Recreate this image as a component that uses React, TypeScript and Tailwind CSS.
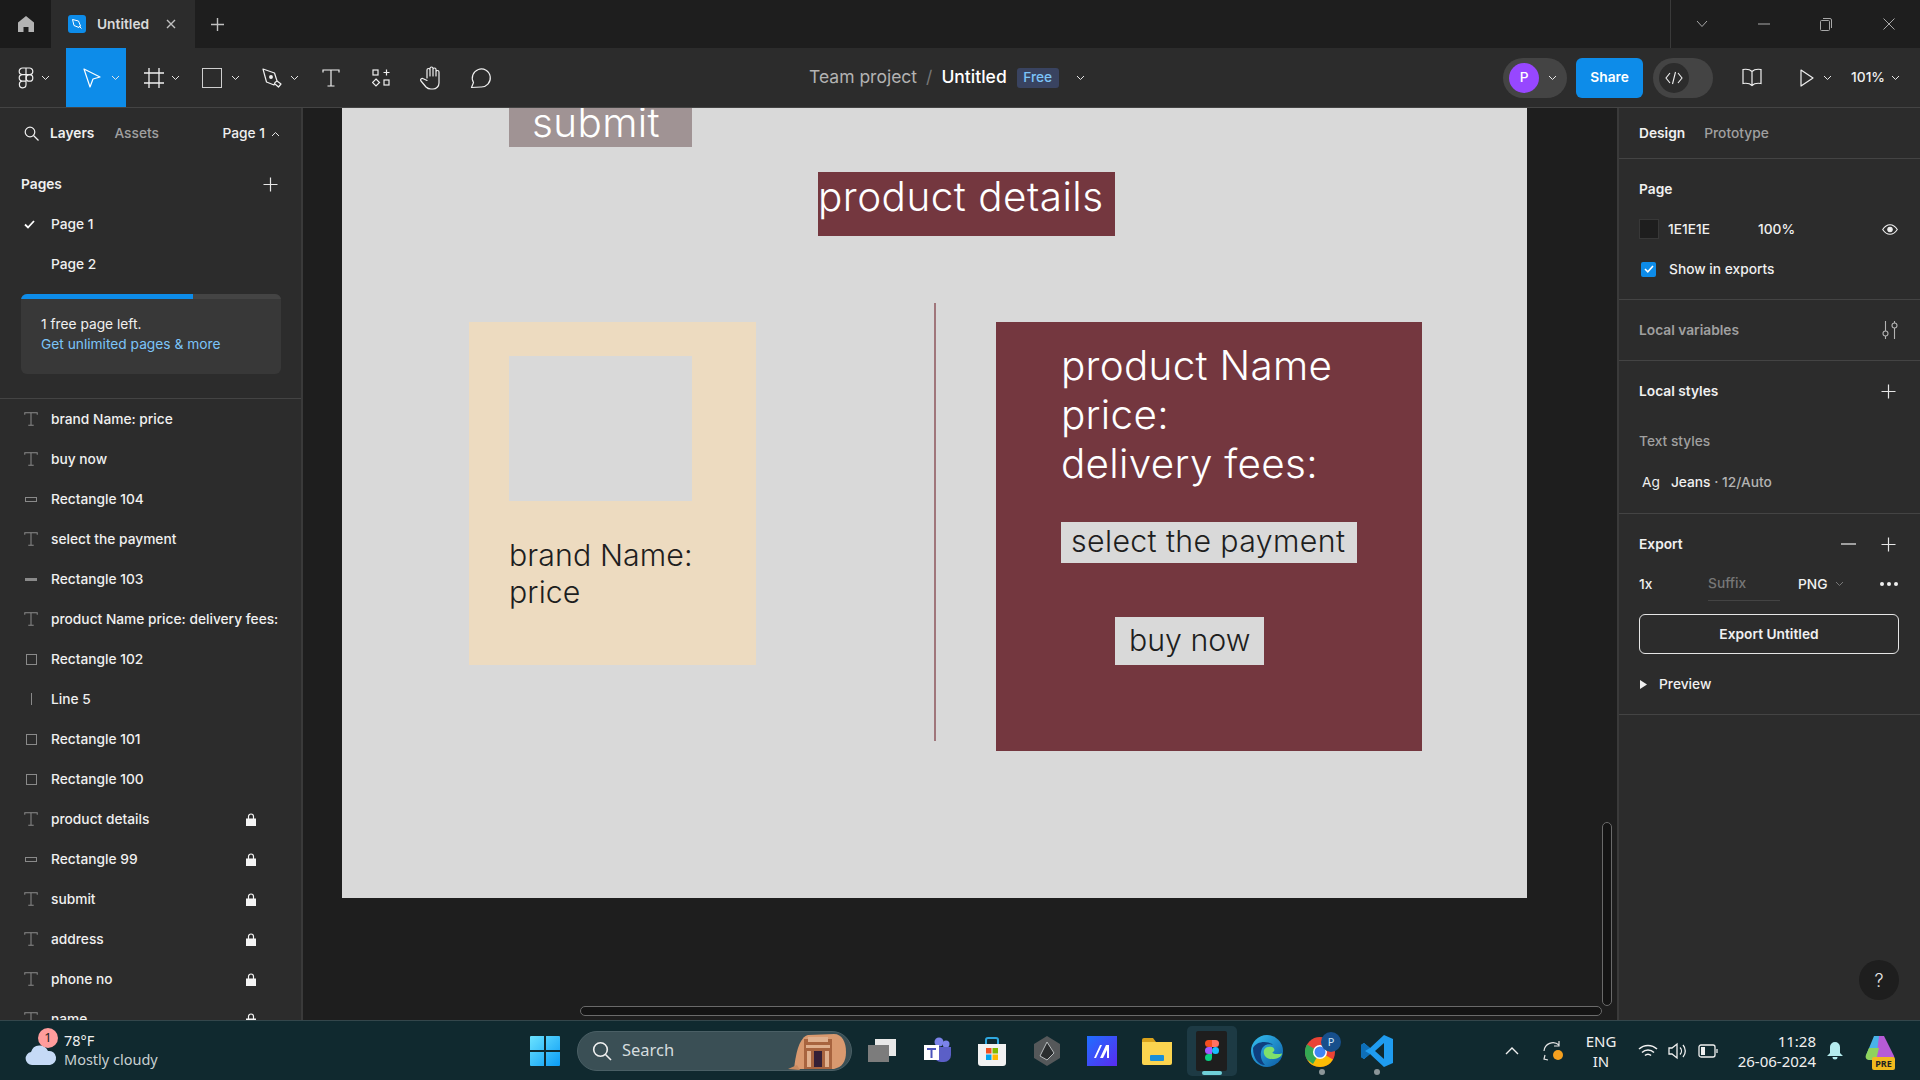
import type { ReactNode } from "react";

const Chevron = ({ className = "", color = "#e6e6e6" }: { className?: string; color?: string }) => (
  <svg width="9" height="6" viewBox="0 0 9 6" fill="none" className={className}>
    <path d="M1 1l3.5 3.5L8 1" stroke={color} strokeWidth="1" />
  </svg>
);

const Plus = ({ size = 15 }: { size?: number }) => (
  <svg width={size} height={size} viewBox="0 0 15 15" fill="none">
    <path d="M7.5 0.5v14M0.5 7.5h14" stroke="#e6e6e6" strokeWidth="1.2" />
  </svg>
);

const FigmaOutline = () => (
  <svg width="16" height="22" viewBox="0 0 16 22" fill="none" stroke="#f0f0f0" strokeWidth="1.2">
    <path d="M8 1H4.5a3.3 3.3 0 000 6.6H8zM8 1h3.5a3.3 3.3 0 010 6.6H8zM8 7.6H4.5a3.3 3.3 0 000 6.6H8zM8 14.2H4.5A3.3 3.3 0 108 17.5z" />
    <circle cx="11.5" cy="10.9" r="3.3" />
  </svg>
);

const MoveIcon = () => (
  <svg width="18" height="20" viewBox="0 0 18 20" fill="none">
    <path d="M1 1l16 8-7 2-3 8z" stroke="#fff" strokeWidth="1.2" strokeLinejoin="round" />
  </svg>
);

const FrameIcon = () => (
  <svg width="20" height="20" viewBox="0 0 20 20" fill="none" stroke="#f0f0f0" strokeWidth="1.3">
    <path d="M5 0v20M15 0v20M0 5h20M0 15h20" />
  </svg>
);

const PenIcon = () => (
  <svg width="20" height="20" viewBox="0 0 20 20" fill="none" stroke="#f0f0f0" strokeWidth="1.2" strokeLinejoin="round">
    <path d="M1 1l11.5 4 2.5 8-2 1.5-1 2.5-7.5-3z" />
    <path d="M15 13l4 3-2.5 3-3.5-3" />
    <circle cx="9" cy="9" r="1.3" fill="#f0f0f0" />
  </svg>
);

const TextGlyph = ({ size = 18, color = "#f0f0f0", stroke = 1.2 }: { size?: number; color?: string; stroke?: number }) => (
  <svg width={size} height={size} viewBox="0 0 18 18" fill="none" stroke={color} strokeWidth={stroke}>
    <path d="M1 3.5V1h16v2.5M9 1v16M5.5 17h7" />
  </svg>
);

const CompsIcon = () => (
  <svg width="18" height="18" viewBox="0 0 18 18" fill="none" stroke="#f0f0f0" strokeWidth="1.2">
    <rect x="1" y="1" width="5" height="5" />
    <path d="M14.5 0.5v6M11.5 3.5h6" />
    <path d="M4 10l3.5 3.5L4 17 .5 13.5z" />
    <rect x="12" y="11" width="5" height="5" />
  </svg>
);

const HandIcon = () => (
  <svg width="22" height="24" viewBox="0 0 22 24" fill="none" stroke="#f0f0f0" strokeWidth="1.2" strokeLinecap="round" strokeLinejoin="round">
    <path d="M7 12V4a1.5 1.5 0 013 0v6V2.5a1.5 1.5 0 013 0V10V3.5a1.5 1.5 0 013 0V10V6a1.5 1.5 0 013 0v11a6 6 0 01-6 6h-2a7 7 0 01-5-2l-5-6a1.6 1.6 0 012.3-2.2L7 14.5" />
  </svg>
);

const CommentIcon = () => (
  <svg width="22" height="22" viewBox="0 0 22 22" fill="none" stroke="#f0f0f0" strokeWidth="1.2" strokeLinejoin="round">
    <path d="M1.5 20.5l2-5A9 9 0 1110.8 20l-9.3.5z" />
  </svg>
);

function ToolCell({ className, children, active }: { className: string; children: ReactNode; active?: boolean }) {
  return <div className={`${className} h-full flex items-center ${active ? "bg-[#0d8ce9]" : ""}`}>{children}</div>;
}

function TitleBar() {
  return (
    <div className="h-12 bg-[#1e1e1e] flex items-stretch shrink-0">
      <div className="w-[52px] flex items-center justify-center border-r border-[#2c2c2c] bg-[#1b1b1b]">
        <svg width="18" height="18" viewBox="0 0 18 18" fill="#b3b3b3">
          <path d="M9 1l8 6.5V17h-5.5v-5h-5v5H1V7.5z" />
        </svg>
      </div>
      <div className="w-[143px] bg-[#2c2c2c] flex items-center pl-[16px]">
        <div className="w-[18px] h-[18px] rounded-[3px] bg-[#0d8ce9] flex items-center justify-center">
          <svg width="12" height="12" viewBox="0 0 12 12" fill="none" stroke="#fff" strokeWidth="1">
            <path d="M1.5 1.5l6 1.5 2 5-1.5 1.5-5-2zM8 8l2.5 2.5" />
          </svg>
        </div>
        <span className="ml-[11px] text-[13.75px] font-semibold text-[#d9d9d9]">Untitled</span>
        <svg width="10" height="10" viewBox="0 0 10 10" className="ml-[17px]" stroke="#c0c0c0" strokeWidth="1.4">
          <path d="M1 1l8 8M9 1l-8 8" />
        </svg>
      </div>
      <div className="w-[44px] flex items-center justify-center">
        <svg width="13" height="13" viewBox="0 0 13 13" stroke="#c0c0c0" strokeWidth="1.4">
          <path d="M6.5 0v13M0 6.5h13" />
        </svg>
      </div>
      <div className="ml-auto w-[250px] border-l border-[#3a3a3a] flex items-center text-[#bdbdbd]">
        <div className="w-[62px] flex justify-center">
          <svg width="12" height="8" viewBox="0 0 12 8" fill="none" stroke="#a8a8a8"><path d="M1 1l5 5.5L11 1" /></svg>
        </div>
        <div className="w-[62px] flex justify-center">
          <svg width="12" height="2" viewBox="0 0 12 2"><path d="M0 1h12" stroke="#a8a8a8" /></svg>
        </div>
        <div className="w-[64px] flex justify-center">
          <svg width="12" height="13" viewBox="0 0 12 13" fill="none" stroke="#a8a8a8"><rect x=".5" y="2.5" width="9" height="10" rx="1" /><path d="M3 .5h7a1.5 1.5 0 011.5 1.5v8" /></svg>
        </div>
        <div className="w-[62px] flex justify-center">
          <svg width="12" height="12" viewBox="0 0 12 12" stroke="#a8a8a8"><path d="M.5.5l11 11M11.5.5l-11 11" /></svg>
        </div>
      </div>
    </div>
  );
}

function Toolbar() {
  return (
    <div className="h-[60px] bg-[#2c2c2c] border-b border-[#444444] flex items-center shrink-0 text-[#f0f0f0]">
      <ToolCell className="w-[66px] pl-[18px] gap-[7px]"><FigmaOutline /><Chevron /></ToolCell>
      <ToolCell className="w-[60px] pl-[17px] gap-[10px]" active><MoveIcon /><Chevron /></ToolCell>
      <ToolCell className="w-[60px] pl-[18px] gap-[7px]"><FrameIcon /><Chevron /></ToolCell>
      <ToolCell className="w-[60px] pl-[16px] gap-[9px]">
        <div className="w-5 h-5 border-[1.5px] border-[#cfcfcf]" />
        <Chevron />
      </ToolCell>
      <ToolCell className="w-[60px] pl-[16px] gap-[8px]"><PenIcon /><Chevron /></ToolCell>
      <ToolCell className="w-[50px] justify-center"><TextGlyph /></ToolCell>
      <ToolCell className="w-[50px] justify-center"><CompsIcon /></ToolCell>
      <ToolCell className="w-[50px] justify-center"><HandIcon /></ToolCell>
      <ToolCell className="w-[50px] justify-center"><CommentIcon /></ToolCell>

      <div className="ml-[303px] flex items-center text-[17.5px]">
        <span className="text-[#b3b3b3]">Team project</span>
        <span className="mx-[9px] text-[#777777]">/</span>
        <span className="text-white font-medium">Untitled</span>
        <span className="ml-[10px] w-[42px] h-5 rounded-[3px] bg-[#394360] text-[#7cc4f8] text-[13.75px] font-medium flex items-center justify-center">Free</span>
        <Chevron className="ml-[17px]" />
      </div>

      <div className="ml-auto flex items-center pr-[20px]">
        <div className="w-[64px] h-10 rounded-full bg-[#444444] flex items-center pl-[6px]">
          <div className="w-[30px] h-[30px] rounded-full bg-[#9747ff] text-white text-[13.75px] font-medium flex items-center justify-center">P</div>
          <Chevron className="ml-[9px]" />
        </div>
        <div className="ml-[9px] w-[67px] h-10 rounded-[6px] bg-[#0d8ce9] text-white text-[13.75px] font-semibold flex items-center justify-center">Share</div>
        <div className="ml-[10px] w-[60px] h-10 rounded-full bg-[#444444] flex items-center pl-[6px]">
          <div className="w-[30px] h-[30px] rounded-full bg-[#2c2c2c] flex items-center justify-center">
            <svg width="18" height="14" viewBox="0 0 18 14" fill="none" stroke="#f0f0f0" strokeWidth="1.1">
              <path d="M5 2L1 7l4 5M13 2l4 5-4 5M10.5 1l-3 12" />
            </svg>
          </div>
        </div>
        <div className="ml-[28px]">
          <svg width="22" height="19" viewBox="0 0 22 19" fill="none" stroke="#f0f0f0" strokeWidth="1.2">
            <path d="M11 3.5C9 1.5 5 1 2 1.5v14c3-.5 7 0 9 2 2-2 6-2.5 9-2v-14c-3-.5-7 0-9 2zM11 3.5v14" />
          </svg>
        </div>
        <div className="ml-[37px]">
          <svg width="14" height="18" viewBox="0 0 14 18" fill="none" stroke="#f0f0f0" strokeWidth="1.2" strokeLinejoin="round">
            <path d="M1 1l12 8-12 8z" />
          </svg>
        </div>
        <Chevron className="ml-[9px]" />
        <span className="ml-[19px] text-[13.75px] font-medium">101%</span>
        <Chevron className="ml-[6px]" />
      </div>
    </div>
  );
}

type LayerKind = "text" | "flat" | "dash" | "square" | "line";

const layers: { name: string; kind: LayerKind; locked?: boolean }[] = [
  { name: "brand Name: price", kind: "text" },
  { name: "buy now", kind: "text" },
  { name: "Rectangle 104", kind: "flat" },
  { name: "select the payment", kind: "text" },
  { name: "Rectangle 103", kind: "dash" },
  { name: "product Name price: delivery fees:", kind: "text" },
  { name: "Rectangle 102", kind: "square" },
  { name: "Line 5", kind: "line" },
  { name: "Rectangle 101", kind: "square" },
  { name: "Rectangle 100", kind: "square" },
  { name: "product details", kind: "text", locked: true },
  { name: "Rectangle 99", kind: "flat", locked: true },
  { name: "submit", kind: "text", locked: true },
  { name: "address", kind: "text", locked: true },
  { name: "phone no", kind: "text", locked: true },
  { name: "name", kind: "text", locked: true },
];

function LayerIcon({ kind }: { kind: LayerKind }) {
  if (kind === "text") return <TextGlyph size={14} color="#8a8a8a" stroke={1.3} />;
  if (kind === "flat") return <div className="w-3 h-[5px] border border-[#8a8a8a]" />;
  if (kind === "dash") return <div className="w-3 h-[3px] bg-[#8a8a8a]" />;
  if (kind === "line") return <div className="w-px h-3 bg-[#8a8a8a]" />;
  return <div className="w-[11px] h-[11px] border border-[#8a8a8a]" />;
}

const Lock = () => (
  <svg width="10" height="13" viewBox="0 0 10 13" className="shrink-0">
    <path d="M2.5 6V3.5a2.5 2.5 0 015 0V6" fill="none" stroke="#f5f5f5" strokeWidth="1.2" />
    <rect y="5.5" width="10" height="7.5" fill="#f5f5f5" />
  </svg>
);

function LeftPanel() {
  return (
    <aside className="w-[303px] h-full bg-[#2c2c2c] border-r-2 border-[#3a3a3a] overflow-hidden shrink-0 text-[13.75px] text-[#f0f0f0]">
      <div className="h-[51px] flex items-center pl-[24px] pr-[21px]">
        <svg width="15" height="15" viewBox="0 0 15 15" fill="none" stroke="#f0f0f0" strokeWidth="1.2">
          <circle cx="6" cy="6" r="4.8" /><path d="M9.5 9.5l5 5" />
        </svg>
        <span className="ml-[11px] font-semibold">Layers</span>
        <span className="ml-[20px] font-medium text-[#a0a0a0]">Assets</span>
        <span className="ml-auto font-medium">Page 1</span>
        <svg width="9" height="6" viewBox="0 0 9 6" fill="none" className="ml-[6px]"><path d="M1 5l3.5-3.5L8 5" stroke="#e6e6e6" /></svg>
      </div>
      <div className="mt-[5px] h-10 flex items-center justify-between pl-[21px] pr-[23px]">
        <span className="font-semibold">Pages</span>
        <Plus />
      </div>
      <div className="h-10 flex items-center pl-[24px] font-medium">
        <svg width="11" height="9" viewBox="0 0 11 9" fill="none" stroke="#fff" strokeWidth="1.8"><path d="M1 4.5l3 3L10 1" /></svg>
        <span className="ml-[16px]">Page 1</span>
      </div>
      <div className="h-10 flex items-center pl-[51px] font-medium">Page 2</div>
      <div className="mx-[21px] mt-[10px] h-[80px] w-[260px] rounded-[6px] bg-[#383838] overflow-hidden">
        <div className="h-[5px] bg-[#444444]">
          <div className="h-full w-[172px] bg-[#0d8ce9]" />
        </div>
        <div className="pl-[20px] pt-[15px] leading-[20px]">
          <div>1 free page left.</div>
          <div className="text-[#7cc4f8]">Get unlimited pages &amp; more</div>
        </div>
      </div>
      <div className="mt-[24px] border-t border-[#444444]">
        {layers.map((layer) => (
          <div key={layer.name} className="h-10 flex items-center font-medium">
            <div className="w-[51px] pl-[24px] pr-[13px] flex justify-center"><LayerIcon kind={layer.kind} /></div>
            <span className="w-[195px] whitespace-nowrap">{layer.name}</span>
            {layer.locked && <Lock />}
          </div>
        ))}
      </div>
    </aside>
  );
}

function Canvas() {
  return (
    <div className="relative flex-1 h-full bg-[#1e1e1e] overflow-hidden">
      {/* frame on the free canvas; offsets are relative to it */}
      <div className="absolute left-[39px] top-0 w-[1185px] h-[790px] bg-[#d9d9d9] font-light">
        <div className="absolute left-[167px] top-0 w-[183px] h-[39px] bg-[#a09394] overflow-hidden text-white text-[40.4px] tracking-[0.4px] leading-[30px] pl-[23px]">submit</div>
        <div className="absolute left-[476px] top-[64px] w-[297px] h-[64px] bg-[#74373f] text-white text-[40.4px] tracking-[0.5px] leading-[50px] whitespace-nowrap">product details</div>

        <div className="absolute left-[127px] top-[214px] w-[287px] h-[343px] bg-[#eddbc0] text-[#1e1e1e]">
          <div className="ml-[40px] mt-[34px] w-[183px] h-[145px] bg-[#d9d9d9]" />
          <div className="ml-[40px] mt-[36px] text-[30.3px] tracking-[0.1px] leading-[37px]">brand Name:<br />price</div>
        </div>

        <div className="absolute left-[592px] top-[195px] w-[2px] h-[438px] bg-[#a0767b]" />

        <div className="absolute left-[654px] top-[214px] w-[426px] h-[429px] bg-[#74373f]">
          <div className="absolute left-[65px] top-[19px] text-white text-[40.4px] tracking-[0.3px] leading-[49px] whitespace-nowrap">product Name<br />price:<br />delivery fees:</div>
          <div className="absolute left-[65px] top-[200px] w-[296px] h-[41px] bg-[#d9d9d9] text-[#1e1e1e] text-[30.3px] tracking-[0.37px] leading-[38px] pl-[10px] whitespace-nowrap">select the payment</div>
          <div className="absolute left-[119px] top-[295px] w-[149px] h-[48px] bg-[#d9d9d9] text-[#1e1e1e] text-[30.3px] leading-[46px] pl-[14px] whitespace-nowrap">buy now</div>
        </div>
      </div>

      <div className="absolute left-[277px] top-[898px] w-[1022px] h-[10px] rounded-full bg-[#141414] border border-[#6a6a6a]" />
      <div className="absolute left-[1299px] top-[714px] w-[10px] h-[184px] rounded-full bg-[#141414] border border-[#6a6a6a]" />
    </div>
  );
}

function SectionRule() {
  return <div className="border-t border-[#444444]" />;
}

function RightPanel() {
  return (
    <aside className="relative w-[303px] h-full bg-[#2c2c2c] border-l-2 border-[#3a3a3a] shrink-0 text-[13.75px] text-[#f0f0f0] overflow-hidden">
      <div className="h-[50px] flex items-center pl-[20px]">
        <span className="font-semibold">Design</span>
        <span className="ml-[19px] font-medium text-[#a0a0a0]">Prototype</span>
      </div>
      <SectionRule />
      <div className="h-[140px] pt-[10px] pl-[20px] pr-[22px] font-medium">
        <div className="h-10 flex items-center font-semibold">Page</div>
        <div className="h-10 flex items-center">
          <div className="w-[20px] h-[20px] bg-[#1e1e1e] border border-[#383838]" />
          <span className="ml-[9px]">1E1E1E</span>
          <span className="ml-[48px]">100%</span>
          <svg width="16" height="11" viewBox="0 0 16 11" fill="none" className="ml-auto" stroke="#f0f0f0" strokeWidth="1.1">
            <path d="M.7 5.5C3 2 5.5.7 8 .7s5 1.3 7.3 4.8C13 9 10.5 10.3 8 10.3S3 9 .7 5.5z" />
            <circle cx="8" cy="5.5" r="2.2" fill="#f0f0f0" />
          </svg>
        </div>
        <div className="h-10 flex items-center">
          <div className="ml-[2px] w-[15px] h-[15px] rounded-[2px] bg-[#0d8ce9] flex items-center justify-center">
            <svg width="10" height="8" viewBox="0 0 10 8" fill="none" stroke="#fff" strokeWidth="1.6"><path d="M1 4l2.8 2.8L9 1" /></svg>
          </div>
          <span className="ml-[13px]">Show in exports</span>
        </div>
      </div>
      <SectionRule />
      <div className="h-[60px] flex items-center justify-between pl-[20px] pr-[22px] font-semibold text-[#a0a0a0]">
        <span>Local variables</span>
        <svg width="16" height="18" viewBox="0 0 16 18" fill="none" stroke="#b3b3b3" strokeWidth="1.1">
          <path d="M3.5 0v10M3.5 15v3M12.5 0v2M12.5 7v11" />
          <circle cx="3.5" cy="12.5" r="2.5" /><circle cx="12.5" cy="4.5" r="2.5" />
        </svg>
      </div>
      <SectionRule />
      <div className="h-[152px] pl-[20px] pr-[24px]">
        <div className="h-[60px] flex items-center justify-between font-semibold">
          <span>Local styles</span>
          <Plus />
        </div>
        <div className="h-10 flex items-center font-medium text-[#a0a0a0]">Text styles</div>
        <div className="h-[40px] mt-[1px] flex items-center font-medium">
          <span className="ml-[3px] font-normal">Ag</span>
          <span className="ml-[11px]">Jeans</span>
          <span className="text-[#b3b3b3]">&nbsp;· 12/Auto</span>
        </div>
      </div>
      <SectionRule />
      <div className="h-[200px] pt-[5px] pl-[20px] pr-[22px]">
        <div className="h-[50px] flex items-center font-semibold">
          <span>Export</span>
          <svg width="15" height="2" viewBox="0 0 15 2" className="ml-auto"><path d="M0 1h15" stroke="#f0f0f0" strokeWidth="1.2" /></svg>
          <div className="ml-[25px] mr-[2px]"><Plus /></div>
        </div>
        <div className="h-[30px] flex items-center font-medium">
          <span className="w-[69px]">1x</span>
          <span className="w-[90px] h-[34px] flex items-center">
            <span className="w-[72px] h-full flex items-center border-b border-[#444444] text-[#777777]">Suffix</span>
          </span>
          <span>PNG</span>
          <Chevron className="ml-[7px]" color="#777777" />
          <div className="ml-auto flex gap-[3px]">
            <div className="w-[4px] h-[4px] rounded-full bg-[#f0f0f0]" />
            <div className="w-[4px] h-[4px] rounded-full bg-[#f0f0f0]" />
            <div className="w-[4px] h-[4px] rounded-full bg-[#f0f0f0]" />
          </div>
        </div>
        <div className="h-[40px] mt-[15px] w-[260px] rounded-[6px] border border-[#e6e6e6] flex items-center justify-center font-semibold">Export Untitled</div>
        <div className="h-[60px] flex items-center font-medium">
          <svg width="7" height="9" viewBox="0 0 7 9" className="ml-[1px]"><path d="M0 0l7 4.5L0 9z" fill="#f0f0f0" /></svg>
          <span className="ml-[12px]">Preview</span>
        </div>
      </div>
      <SectionRule />
      <div className="absolute right-[21px] bottom-[20px] w-10 h-10 rounded-full bg-[#1e1e1e] flex items-center justify-center text-[#e6e6e6] text-[18px] font-light">?</div>
    </aside>
  );
}

const WindowsLogo = () => (
  <svg width="30" height="30" viewBox="0 0 30 30">
    <defs>
      <linearGradient id="win" x1="0" y1="0" x2="1" y2="1">
        <stop offset="0" stopColor="#6be3ff" />
        <stop offset="1" stopColor="#0a9bf5" />
      </linearGradient>
    </defs>
    <path d="M1 0h13v14H0V1a1 1 0 011-1zM16 0h13a1 1 0 011 1v13H16zM0 16h14v14H1a1 1 0 01-1-1zM16 16h14v13a1 1 0 01-1 1H16z" fill="url(#win)" />
  </svg>
);

const Temple = () => (
  <svg width="62" height="40" viewBox="0 0 62 40">
    <path d="M8 38C10 20 14 6 22 4l26-1c8 0 12 8 12 18 0 10-4 15-12 17z" fill="#d9996f" />
    <path d="M18 8h28v30H18z" fill="#a8643f" />
    <path d="M22 6h20v5H22zM20 14h24v3H20z" fill="#e0b08e" />
    <path d="M28 20h8v16h-8z" fill="#342037" />
    <path d="M21 20h4v16h-4zM39 20h4v16h-4z" fill="#e0b08e" />
    <path d="M2 38l9-4 3 5z" fill="#c98a60" />
  </svg>
);

function TaskIcon({ children, dot }: { children: ReactNode; dot?: boolean }) {
  return (
    <div className="relative w-[55px] h-full flex items-center justify-center shrink-0">
      {children}
      {dot && <div className="absolute bottom-[5px] w-[6px] h-[6px] rounded-full bg-[#8b9598]" />}
    </div>
  );
}

function Taskbar() {
  return (
    <div className="relative h-[60px] bg-[#10292f] border-t border-[#34464b] flex items-center shrink-0 text-[#f0f0f0] font-['Noto_Sans',sans-serif]">
      <div className="relative w-[530px] h-full shrink-0">
        <svg width="32" height="22" viewBox="0 0 32 22" className="absolute left-[25px] top-[22px]">
          <path d="M7 22a6.5 6.5 0 01-1-12.9A9 9 0 0123 8a7 7 0 012 14z" fill="#c5daf6" />
        </svg>
        <div className="absolute left-[38px] top-[7px] w-[20px] h-[20px] rounded-full bg-[#ff9c9c] text-[#1e1e1e] text-[13px] flex items-center justify-center">1</div>
        <div className="absolute left-[64px] top-[9px] text-[14.5px] leading-[20px]">78°F</div>
        <div className="absolute left-[64px] top-[28px] text-[14.5px] leading-[20px] text-[#c8d0d2]">Mostly cloudy</div>
      </div>
      <WindowsLogo />
      <div className="ml-[17px] w-[275px] h-10 rounded-full bg-[#3a4f55] border border-[#4a5f65] flex items-center pl-[14px] relative shrink-0">
        <svg width="20" height="20" viewBox="0 0 20 20" fill="none" stroke="#f0f0f0" strokeWidth="1.6">
          <circle cx="8.5" cy="8.5" r="6.8" /><path d="M13.5 13.5l5.5 5.5" />
        </svg>
        <span className="ml-[10px] text-[16.5px] text-[#d5dcde]">Search</span>
        <div className="absolute right-[3px] top-[-1px]"><Temple /></div>
      </div>
      <div className="ml-[2px] flex items-center h-full">
        <TaskIcon>
          <svg width="30" height="26" viewBox="0 0 30 26">
            <rect x="8" y="1" width="21" height="17" fill="#e8e8e8" />
            <rect x="1" y="7" width="21" height="17" fill="#7c7c7c" />
          </svg>
        </TaskIcon>
        <TaskIcon>
          <svg width="28" height="28" viewBox="0 0 28 28">
            <circle cx="23" cy="7" r="3.5" fill="#7b83eb" /><circle cx="16" cy="5" r="4.5" fill="#7b83eb" />
            <path d="M11 10h17v8a7 7 0 01-7 7h-3a7 7 0 01-7-7z" fill="#5b5fc7" />
            <rect x="1" y="8" width="15" height="15" fill="#fff" />
            <path d="M4 11h9v2H9.5v8h-2v-8H4z" fill="#4b53bc" />
          </svg>
        </TaskIcon>
        <TaskIcon>
          <svg width="30" height="30" viewBox="0 0 30 30">
            <path d="M9 8V4a2 2 0 012-2h8a2 2 0 012 2v4" fill="none" stroke="#2fa8e0" strokeWidth="2" />
            <path d="M1 8h28v19a3 3 0 01-3 3H4a3 3 0 01-3-3z" fill="#f2f2f2" />
            <rect x="9" y="12" width="5.5" height="5.5" fill="#f25022" /><rect x="15.5" y="12" width="5.5" height="5.5" fill="#7fba00" />
            <rect x="9" y="18.5" width="5.5" height="5.5" fill="#00a4ef" /><rect x="15.5" y="18.5" width="5.5" height="5.5" fill="#ffb900" />
          </svg>
        </TaskIcon>
        <TaskIcon>
          <svg width="26" height="30" viewBox="0 0 26 30">
            <path d="M13 0l13 8v14l-13 8L0 22V8z" fill="#55585a" />
            <path d="M13 6l7 11-7 7-7-4z" fill="#2a2d2f" stroke="#b8bcbe" />
          </svg>
        </TaskIcon>
        <TaskIcon>
          <svg width="30" height="30" viewBox="0 0 30 30">
            <defs><linearGradient id="mv" x1="0" y1="0" x2="1" y2="1"><stop offset="0" stopColor="#1f6fff" /><stop offset="1" stopColor="#5a2bf0" /></linearGradient></defs>
            <rect width="30" height="30" fill="url(#mv)" />
            <path d="M7 22l6-13h2l-6 13zM13 22l6-13h3v13h-2v-8l-4 8z" fill="#fff" />
          </svg>
        </TaskIcon>
        <TaskIcon>
          <svg width="30" height="28" viewBox="0 0 30 28">
            <path d="M0 3a2 2 0 012-2h9l3 4H0z" fill="#d9a21b" />
            <path d="M0 5h30v21a2 2 0 01-2 2H2a2 2 0 01-2-2z" fill="#fbd44f" />
            <rect x="8" y="18" width="14" height="6" rx="1" fill="#1a8fd8" />
          </svg>
        </TaskIcon>
        <TaskIcon>
          <div className="relative w-[50px] h-[50px] rounded-[5px] bg-[#1d3a44] flex items-center justify-center">
            <div className="w-[31px] h-[40px] bg-[#1e1e1e] rounded-[2px] flex items-center justify-center">
              <svg width="14" height="22" viewBox="0 0 14 22">
                <path d="M7 0H3.5a3.5 3.5 0 000 7H7z" fill="#f24e1e" />
                <path d="M7 0h3.5a3.5 3.5 0 010 7H7z" fill="#ff7262" />
                <path d="M7 7H3.5a3.5 3.5 0 000 7H7z" fill="#a259ff" />
                <circle cx="10.5" cy="10.5" r="3.5" fill="#1abcfe" />
                <path d="M7 14H3.5A3.5 3.5 0 107 17.5z" fill="#0acf83" />
              </svg>
            </div>
            <div className="absolute bottom-[1px] left-[15px] w-[20px] h-[4px] rounded-full bg-[#6fd0d8]" />
          </div>
        </TaskIcon>
        <TaskIcon>
          <svg width="32" height="32" viewBox="0 0 32 32">
            <defs><linearGradient id="edge" x1="0" y1="0" x2="1" y2="1"><stop offset="0" stopColor="#35c1f1" /><stop offset="1" stopColor="#0c59a4" /></linearGradient></defs>
            <circle cx="16" cy="16" r="16" fill="url(#edge)" />
            <path d="M31 18c0 4-5 6-10 6-7 0-9-5-8-9 1-3 5-4 8-3 3 1 3 4 1 5-3 2 9 3 9 1z" fill="#7fe06b" />
            <path d="M2 13c3-7 15-8 20-3-5-2-11 0-12 7-1 5 1 10 4 13C8 30 2 24 2 13z" fill="#0f3f7f" />
          </svg>
        </TaskIcon>
        <TaskIcon dot>
          <svg width="36" height="36" viewBox="0 0 36 36" className="mt-[-2px] ml-[3px]">
            <circle cx="15" cy="20" r="15" fill="#ea4335" />
            <path d="M15 20L28 27.5A15 15 0 012 27.5z" fill="#fbbc05" />
            <path d="M2 27.5A15 15 0 012 12.5l13 7.5-7 12z" fill="#34a853" />
            <circle cx="15" cy="20" r="7" fill="#fff" /><circle cx="15" cy="20" r="5.5" fill="#4285f4" />
            <circle cx="26" cy="10" r="10" fill="#174f8c" />
            <text x="26" y="14" textAnchor="middle" fontSize="11" fill="#cfe3f7" fontFamily="Noto Sans">P</text>
          </svg>
        </TaskIcon>
        <TaskIcon dot>
          <svg width="32" height="32" viewBox="0 0 32 32">
            <path d="M23 0l9 4v24l-9 4-14-13-6 5-3-2v-12l3-2 6 5z" fill="#1f9cf0" />
            <path d="M23 8l-9 8 9 8z" fill="#10292f" />
            <path d="M0 10l3-2 6 5-5 3 5 3-6 5-3-2z" fill="#0e6fb8" />
          </svg>
        </TaskIcon>
      </div>
      <div className="ml-auto flex items-center h-full pr-[25px]">
        <svg width="14" height="8" viewBox="0 0 14 8" fill="none" stroke="#f0f0f0" strokeWidth="1.4"><path d="M1 7l6-6 6 6" /></svg>
        <svg width="22" height="24" viewBox="0 0 22 24" fill="none" className="ml-[23px]">
          <path d="M2 12a9 9 0 0115-6M17 2v5h-5M6 21l-4-1 1-4" stroke="#e6e6e6" strokeWidth="1.2" />
          <circle cx="16" cy="16" r="5" fill="#f5a01f" />
        </svg>
        <div className="ml-[16px] w-[42px] text-center text-[15px] leading-[20px]">ENG<br />IN</div>
        <svg width="20" height="16" viewBox="0 0 20 16" fill="none" stroke="#f0f0f0" strokeWidth="1.5" className="ml-[16px]">
          <path d="M1 6a13 13 0 0118 0M4 9.5a8.5 8.5 0 0112 0M7 12.5a4 4 0 016 0" />
        </svg>
        <svg width="20" height="18" viewBox="0 0 20 18" fill="none" stroke="#f0f0f0" strokeWidth="1.3" className="ml-[10px]">
          <path d="M1 6h3l5-4v14l-5-4H1zM12 5.5a5 5 0 010 7M15 3a9 9 0 010 12" />
        </svg>
        <svg width="20" height="14" viewBox="0 0 20 14" fill="none" stroke="#f0f0f0" strokeWidth="1.3" className="ml-[10px]">
          <rect x="1" y="1" width="16" height="12" rx="2" /><path d="M19 5v4" /><rect x="3" y="3" width="4" height="8" fill="#f0f0f0" stroke="none" />
        </svg>
        <div className="ml-[2px] w-[96px] text-right text-[15px] leading-[20px]">11:28<br />26-06-2024</div>
        <svg width="16" height="18" viewBox="0 0 16 18" className="ml-[11px]" fill="#b5ecef">
          <path d="M8 0a5 5 0 015 5v6l3 3H0l3-3V5a5 5 0 015-5zM5.5 15h5a2.5 2.5 0 01-5 0z" />
        </svg>
        <div className="relative ml-[22px] w-[30px] h-[32px]">
          <svg width="30" height="26" viewBox="0 0 30 26">
            <path d="M9 1h8l6 24H6C2 25 0 22 2 18z" fill="#49b3e8" />
            <path d="M14 1h5l10 20c1 3-1 4-4 4H11z" fill="#b65bd6" />
            <path d="M4 13h10l-3 12H4c-3 0-4-3-3-5z" fill="#8ed35d" />
          </svg>
          <div className="absolute left-[7px] bottom-[-3px] w-[23px] h-[13px] rounded-[2px] bg-[#f2b91e] text-[#222] text-[9px] font-bold leading-[13px] text-center">PRE</div>
        </div>
      </div>
    </div>
  );
}

export default function App() {
  return (
    <div className="w-[1920px] h-[1080px] flex flex-col overflow-hidden font-[Inter] bg-[#1e1e1e]">
      <TitleBar />
      <Toolbar />
      <div className="flex-1 min-h-0 flex">
        <LeftPanel />
        <Canvas />
        <RightPanel />
      </div>
      <Taskbar />
    </div>
  );
}
